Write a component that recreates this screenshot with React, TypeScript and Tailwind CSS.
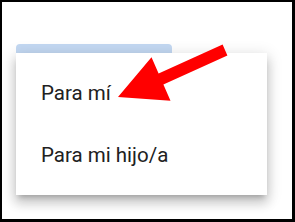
export default function App() {
  const items = ["Para mí", "Para mi hijo/a"];

  return (
    <div className="relative h-[222px] w-[295px] overflow-hidden border-t-2 border-l-2 border-r-[3px] border-b-[3px] border-black bg-white font-['Roboto','Liberation_Sans',sans-serif]">
      <div className="pl-[14px] pt-[42px]">
        {/* selected field behind the menu */}
        <div className="h-[9px] w-[156px] rounded-t-[4px] bg-[#c3d8f2]" />

        {/* dropdown menu */}
        <div className="w-[251px] bg-white py-[9px] shadow-[0_5px_5px_-3px_rgba(0,0,0,0.2),0_8px_10px_1px_rgba(0,0,0,0.14),0_3px_14px_2px_rgba(0,0,0,0.12)]">
          {items.map(label => (
            <div
              key={label}
              className="flex h-[62px] items-center pl-[25px] text-[20.5px] text-[#212121]"
            >
              {label}
            </div>
          ))}
        </div>
      </div>

      {/* annotation arrow */}
      <svg
        className="pointer-events-none absolute left-[-2px] top-[-2px]"
        width="295"
        height="222"
        viewBox="0 0 295 222"
      >
        <polygon
          fill="#ff0000"
          points="118,97 151.5,57.3 158.6,73.5 222.6,44.5 227.4,55.5 163.4,84.5 170.5,100.7"
        />
      </svg>
    </div>
  );
}
